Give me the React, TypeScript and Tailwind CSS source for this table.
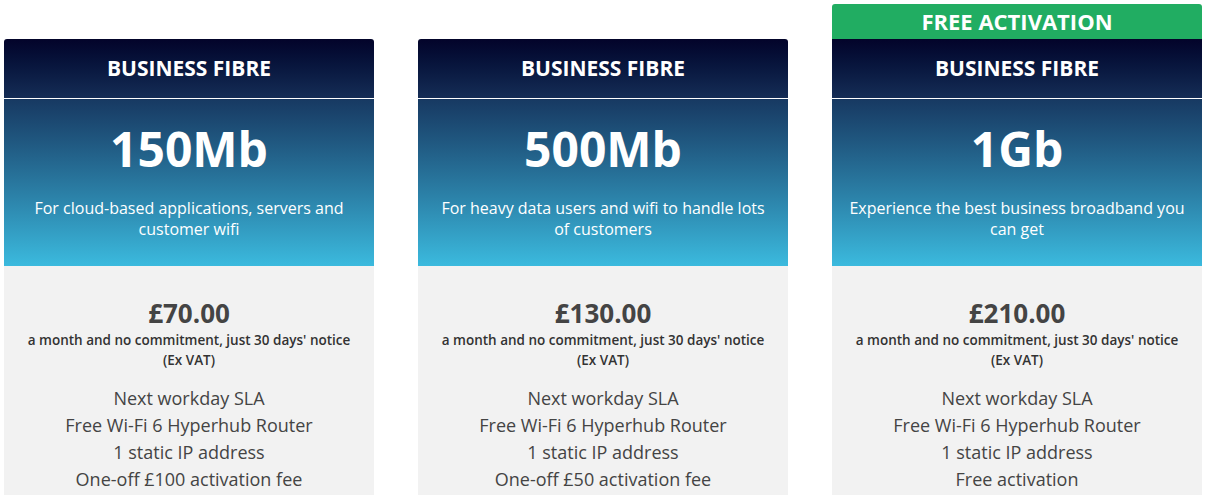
const plans = [
  {
    speed: "150Mb",
    blurb: ["For cloud-based applications, servers and", "customer wifi"],
    price: "£70.00",
    fee: "One-off £100 activation fee",
    badge: false,
  },
  {
    speed: "500Mb",
    blurb: ["For heavy data users and wifi to handle lots", "of customers"],
    price: "£130.00",
    fee: "One-off £50 activation fee",
    badge: false,
  },
  {
    speed: "1Gb",
    blurb: ["Experience the best business broadband you", "can get"],
    price: "£210.00",
    fee: "Free activation",
    badge: true,
  },
];

const PlanCard = ({ plan }: { plan: (typeof plans)[number] }) => {
  return (
    <div className="flex w-[370px] flex-col">
      {plan.badge ? (
        <div className="flex h-[35px] items-center justify-center rounded-t-[3px] bg-[#21ad62] text-[22px] font-bold text-white">
          FREE ACTIVATION
        </div>
      ) : (
        <div className="h-[35px]" />
      )}
      <div
        className={`flex h-[59px] items-center justify-center bg-gradient-to-b from-[#03042a] to-[#152d56] text-[21px] font-bold text-white ${
          plan.badge ? "" : "rounded-t-[3px]"
        }`}
      >
        BUSINESS FIBRE
      </div>
      <div className="h-px bg-white" />
      <div className="flex h-[167px] flex-col items-center bg-gradient-to-b from-[#173962] to-[#3bbade] px-2 text-center text-white">
        <div className="mt-[18px] text-[48px] font-bold leading-[64px]">{plan.speed}</div>
        <p className="mt-[17px] whitespace-nowrap text-[16px] leading-[21px]">
          {plan.blurb[0]}
          <br />
          {plan.blurb[1]}
        </p>
      </div>
      <div className="flex flex-col items-center bg-[#f2f2f2] pb-4 text-center">
        <div className="mt-[31px] text-[26px] font-bold leading-[32px] text-[#444]">{plan.price}</div>
        <p className="mt-[1px] whitespace-nowrap text-[13.5px] font-semibold leading-[20px] text-[#333]">
          a month and no commitment, just 30 days' notice
          <br />
          (Ex VAT)
        </p>
        <ul className="mt-[15px] text-[18px] leading-[27px] text-[#444]">
          <li>Next workday SLA</li>
          <li>Free Wi-Fi 6 Hyperhub Router</li>
          <li>1 static IP address</li>
          <li>{plan.fee}</li>
        </ul>
      </div>
    </div>
  );
};

export default function App() {
  return (
    <div className="h-[495px] overflow-hidden bg-white font-['Open_Sans',sans-serif]">
      <div className="flex gap-[44px] pl-[4px] pt-[4px]">
        {plans.map((p) => (
          <PlanCard key={p.speed} plan={p} />
        ))}
      </div>
    </div>
  );
}
